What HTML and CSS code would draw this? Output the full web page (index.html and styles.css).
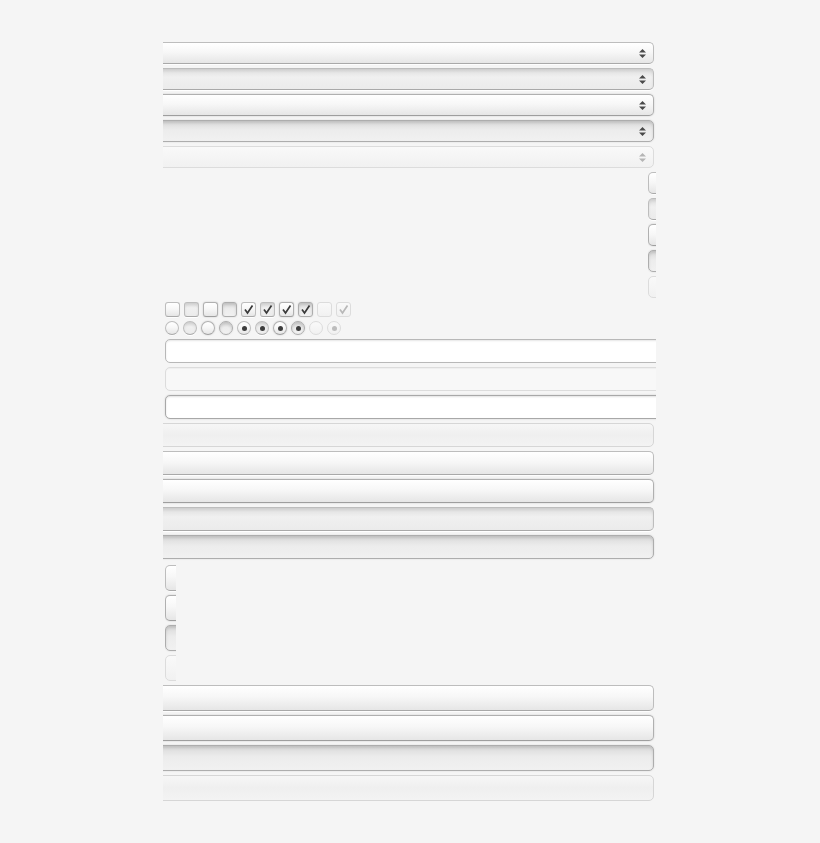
FILE: index.html
```html
<!DOCTYPE html>
<html lang="en">
<head>
  <meta charset="UTF-8">
  <title>Form Controls Sprite</title>
  <link rel="stylesheet" href="styles.css">
</head>
<body>

  <div class="sheet">

    <!-- select boxes: normal, hover, focus, active, disabled -->
    <div class="selects">
      <div class="select"><svg class="arrows" width="7" height="9" viewBox="0 0 7 9"><path d="M3.5 0 L7 3.5 H0 Z M3.5 9 L7 5.5 H0 Z"/></svg></div>
      <div class="select is-hover"><svg class="arrows" width="7" height="9" viewBox="0 0 7 9"><path d="M3.5 0 L7 3.5 H0 Z M3.5 9 L7 5.5 H0 Z"/></svg></div>
      <div class="select is-focus"><svg class="arrows" width="7" height="9" viewBox="0 0 7 9"><path d="M3.5 0 L7 3.5 H0 Z M3.5 9 L7 5.5 H0 Z"/></svg></div>
      <div class="select is-active"><svg class="arrows" width="7" height="9" viewBox="0 0 7 9"><path d="M3.5 0 L7 3.5 H0 Z M3.5 9 L7 5.5 H0 Z"/></svg></div>
      <div class="select is-disabled"><svg class="arrows" width="7" height="9" viewBox="0 0 7 9"><path d="M3.5 0 L7 3.5 H0 Z M3.5 9 L7 5.5 H0 Z"/></svg></div>
    </div>

    <!-- button caps, cut off by the sheet edge -->
    <div class="caps">
      <div class="cap"></div>
      <div class="cap is-hover"></div>
      <div class="cap is-focus"></div>
      <div class="cap is-active"></div>
      <div class="cap is-disabled"></div>
    </div>

    <div class="checks">
      <span class="check"></span>
      <span class="check is-hover"></span>
      <span class="check is-focus"></span>
      <span class="check is-active"></span>
      <span class="check on"><svg width="11" height="11" viewBox="0 0 11 11"><path d="M2 5.5 L4.5 9 L9.5 1.5" /></svg></span>
      <span class="check on is-hover"><svg width="11" height="11" viewBox="0 0 11 11"><path d="M2 5.5 L4.5 9 L9.5 1.5" /></svg></span>
      <span class="check on is-focus"><svg width="11" height="11" viewBox="0 0 11 11"><path d="M2 5.5 L4.5 9 L9.5 1.5" /></svg></span>
      <span class="check on is-active"><svg width="11" height="11" viewBox="0 0 11 11"><path d="M2 5.5 L4.5 9 L9.5 1.5" /></svg></span>
      <span class="check is-disabled"></span>
      <span class="check on is-disabled"><svg width="11" height="11" viewBox="0 0 11 11"><path d="M2 5.5 L4.5 9 L9.5 1.5" /></svg></span>
    </div>

    <div class="radios">
      <span class="radio"></span>
      <span class="radio is-hover"></span>
      <span class="radio is-focus"></span>
      <span class="radio is-active"></span>
      <span class="radio on"></span>
      <span class="radio on is-hover"></span>
      <span class="radio on is-focus"></span>
      <span class="radio on is-active"></span>
      <span class="radio is-disabled"></span>
      <span class="radio on is-disabled"></span>
    </div>

    <!-- text fields -->
    <div class="fields">
      <div class="field"></div>
      <div class="field is-disabled"></div>
      <div class="field is-focus"></div>
    </div>

    <!-- wide bars, cut on the left -->
    <div class="bars">
      <div class="bar is-disabled"></div>
      <div class="bar"></div>
      <div class="bar is-focus"></div>
      <div class="bar is-hover"></div>
      <div class="bar is-active"></div>
    </div>

    <!-- small button caps -->
    <div class="tabs">
      <div class="tab"></div>
      <div class="tab is-focus"></div>
      <div class="tab is-active"></div>
      <div class="tab is-disabled"></div>
    </div>

    <div class="bars tall">
      <div class="bar"></div>
      <div class="bar is-focus"></div>
      <div class="bar is-active"></div>
      <div class="bar is-disabled"></div>
    </div>

  </div>

</body>
</html>
```

FILE: styles.css
```css
body {
  margin: 0;
  background: #f5f5f5;
  font-family: "Liberation Sans", Arial, sans-serif;
}
.sheet {
  width: 493px;
  margin-left: 163px;
  padding-top: 42px;
  overflow: hidden;
  display: flex;
  flex-direction: column;
}

/* shared looks */
.select, .cap, .check, .radio, .field, .bar, .tab {
  box-sizing: border-box;
  border: 1px solid #bdbdbd;
  border-bottom-color: #a9a9a9;
  background: linear-gradient(#ffffff, #f7f7f7 45%, #e6e6e6);
  box-shadow: 0 1px 0 rgba(255,255,255,.9), 0 1px 1px rgba(0,0,0,.06);
}
.is-hover {
  background: linear-gradient(#dedede, #f0f0f0 40%, #ebebeb);
  box-shadow: inset 0 2px 3px rgba(0,0,0,.08), 0 1px 0 #fff;
}
.is-focus {
  border-color: #b0b0b0;
  border-bottom-color: #9e9e9e;
  box-shadow: 0 0 2px rgba(0,0,0,.18);
}
.is-active {
  background: linear-gradient(#d9d9d9, #ececec 45%, #f1f1f1);
  border-color: #adadad;
  box-shadow: inset 0 2px 3px rgba(0,0,0,.12), 0 0 2px rgba(0,0,0,.12);
}
.is-disabled {
  border-color: #dcdcdc;
  background: linear-gradient(#f9f9f9, #f1f1f1);
  box-shadow: none;
}

/* selects */
.selects {
  display: flex;
  flex-direction: column;
  gap: 4px;
}
.select {
  width: 499px;
  height: 22px;
  margin-left: -8px;
  border-radius: 5px;
  display: flex;
  align-items: center;
  justify-content: flex-end;
  padding-right: 7px;
}
.arrows {
  fill: #4a4a4a;
}
.select.is-disabled .arrows {
  fill: #b5b5b5;
}

/* button caps on the right edge */
.caps {
  display: flex;
  flex-direction: column;
  gap: 4px;
  margin-top: 4px;
  align-self: flex-end;
  width: 8px;
  overflow: hidden;
  padding: 0 0 2px 0;
}
.cap {
  width: 40px;
  height: 22px;
  border-radius: 5px;
  flex: none;
}

/* checkboxes and radios */
.checks, .radios {
  display: flex;
  gap: 4px;
  padding-left: 2px;
}
.checks {
  margin-top: 2px;
}
.radios {
  margin-top: 4px;
}
.check {
  width: 15px;
  height: 15px;
  border-radius: 3px;
  display: flex;
  align-items: center;
  justify-content: center;
}
.check svg path {
  fill: none;
  stroke: #3a3a3a;
  stroke-width: 1.7;
}
.check.is-disabled svg path {
  stroke: #b8b8b8;
}
.radio {
  width: 14px;
  height: 14px;
  border-radius: 50%;
  display: flex;
  align-items: center;
  justify-content: center;
}
.radio.on::after {
  content: "";
  width: 5px;
  height: 5px;
  border-radius: 50%;
  background: #3d3d3d;
}
.radio.on.is-disabled::after {
  background: #bdbdbd;
}

/* text fields, cut on the right */
.fields {
  display: flex;
  flex-direction: column;
  gap: 4px;
  margin-top: 4px;
  padding-left: 2px;
}
.field {
  width: 500px;
  height: 24px;
  border-radius: 5px;
  background: #fff;
  border-color: #b8b8b8;
  box-shadow: inset 0 1px 2px rgba(0,0,0,.1);
}
.field.is-disabled {
  background: #f8f8f8;
  border-color: #dcdcdc;
  box-shadow: inset 0 1px 1px rgba(0,0,0,.04);
}
.field.is-focus {
  border-color: #a8a8a8;
  box-shadow: inset 0 1px 2px rgba(0,0,0,.12), 0 0 2px rgba(0,0,0,.15);
}

/* wide bars */
.bars {
  display: flex;
  flex-direction: column;
  gap: 4px;
  margin-top: 4px;
}
.bar {
  width: 499px;
  height: 24px;
  margin-left: -8px;
  border-radius: 5px;
}
.bars.tall .bar {
  height: 26px;
}
.bar.is-disabled {
  border-color: #d6d6d6;
  background: linear-gradient(#f6f6f6, #efefef 50%, #f3f3f3);
}

/* small caps */
.tabs {
  display: flex;
  flex-direction: column;
  gap: 4px;
  margin-top: 6px;
  margin-left: 2px;
  width: 11px;
  overflow: hidden;
}
.tab {
  width: 40px;
  height: 26px;
  border-radius: 5px;
  flex: none;
}
.tabs + .bars {
  margin-top: 4px;
}
```
